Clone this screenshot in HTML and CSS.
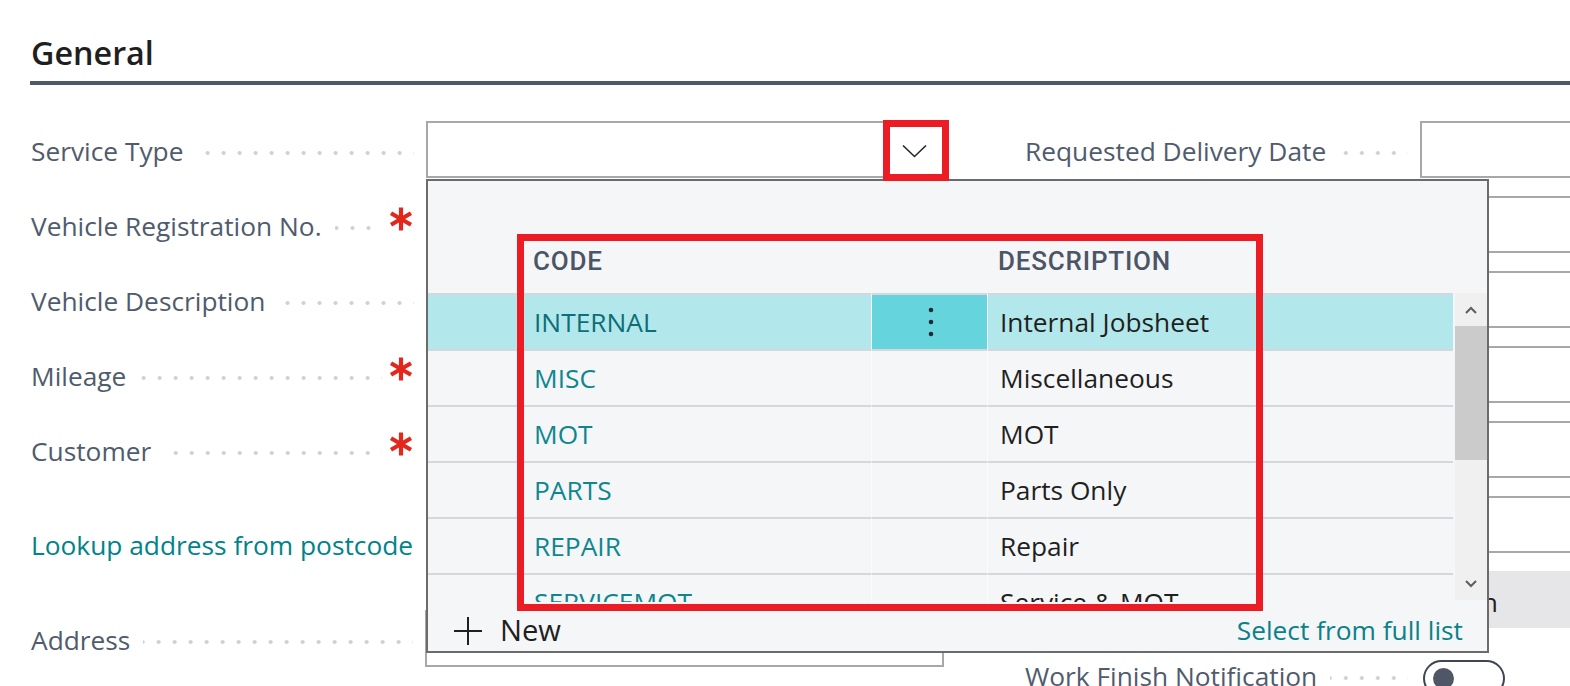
FILE: index.html
```html
<!DOCTYPE html>
<html lang="en">
<head>
<meta charset="utf-8">
<title>General</title>
<link rel="stylesheet" href="styles.css">
</head>
<body>
<div class="page">
  <header class="section-head">
    <h2 class="section-title">General</h2>
  </header>

  <div class="form">
    <div class="col">
      <div class="row">
        <div class="label"><span class="label-text">Service Type</span><span class="leader"></span></div>
        <div class="field field-select">
          <svg class="chevron" width="25" height="14" viewBox="0 0 25 14"><path d="M1 1.5 L12.5 12.5 L24 1.5" fill="none" stroke="#262626" stroke-width="1.6"/></svg>
        </div>
      </div>
      <div class="row">
        <div class="label label-req"><span class="label-text">Vehicle Registration No.</span><span class="leader"></span><span class="req"><svg width="24" height="24" viewBox="0 0 24 24"><g stroke="#e2271d" stroke-width="4.2"><line x1="12" y1="0.5" x2="12" y2="23.5"/><line x1="2" y1="6.2" x2="22" y2="17.8"/><line x1="2" y1="17.8" x2="22" y2="6.2"/></g></svg></span></div>
        <div class="field"></div>
      </div>
      <div class="row">
        <div class="label"><span class="label-text">Vehicle Description</span><span class="leader"></span></div>
        <div class="field"></div>
      </div>
      <div class="row">
        <div class="label label-req"><span class="label-text">Mileage</span><span class="leader"></span><span class="req"><svg width="24" height="24" viewBox="0 0 24 24"><g stroke="#e2271d" stroke-width="4.2"><line x1="12" y1="0.5" x2="12" y2="23.5"/><line x1="2" y1="6.2" x2="22" y2="17.8"/><line x1="2" y1="17.8" x2="22" y2="6.2"/></g></svg></span></div>
        <div class="field"></div>
      </div>
      <div class="row">
        <div class="label label-req"><span class="label-text">Customer</span><span class="leader"></span><span class="req"><svg width="24" height="24" viewBox="0 0 24 24"><g stroke="#e2271d" stroke-width="4.2"><line x1="12" y1="0.5" x2="12" y2="23.5"/><line x1="2" y1="6.2" x2="22" y2="17.8"/><line x1="2" y1="17.8" x2="22" y2="6.2"/></g></svg></span></div>
        <div class="field"></div>
      </div>
      <div class="row row-link">
        <a class="link" href="#">Lookup address from postcode</a>
      </div>
      <div class="row">
        <div class="label"><span class="label-text">Address</span><span class="leader"></span></div>
        <div class="field field-wide"></div>
      </div>
    </div>

    <div class="col">
      <div class="row">
        <div class="label"><span class="label-text">Requested Delivery Date</span><span class="leader"></span></div>
        <div class="field"></div>
      </div>
      <div class="row"><div class="label"></div><div class="field"></div></div>
      <div class="row"><div class="label"></div><div class="field"></div></div>
      <div class="row"><div class="label"></div><div class="field"></div></div>
      <div class="row"><div class="label"></div><div class="field"></div></div>
      <div class="row"><div class="label"></div><div class="field"></div></div>
      <div class="row">
        <div class="label"></div>
        <div class="field field-button"><span class="button-text">Scan</span></div>
      </div>
      <div class="row">
        <div class="label"><span class="label-text">Work Finish Notification</span><span class="leader"></span></div>
        <div class="toggle"><span class="knob"></span></div>
      </div>
    </div>
  </div>

  <div class="lookup-panel">
    <div class="panel-head">
      <span></span>
      <span class="th th-code">CODE</span>
      <span></span>
      <span class="th th-desc">DESCRIPTION</span>
    </div>
    <div class="panel-body">
      <div class="list">
        <div class="list-row selected">
          <span class="cell"></span>
          <span class="cell code">INTERNAL</span>
          <span class="cell action"><svg width="6" height="30" viewBox="0 0 6 30"><circle cx="3" cy="3" r="2.3" fill="#1f2b33"/><circle cx="3" cy="15" r="2.3" fill="#1f2b33"/><circle cx="3" cy="27" r="2.3" fill="#1f2b33"/></svg></span>
          <span class="cell desc">Internal Jobsheet</span>
        </div>
        <div class="list-row">
          <span class="cell"></span><span class="cell code">MISC</span><span class="cell action"></span><span class="cell desc">Miscellaneous</span>
        </div>
        <div class="list-row">
          <span class="cell"></span><span class="cell code">MOT</span><span class="cell action"></span><span class="cell desc">MOT</span>
        </div>
        <div class="list-row">
          <span class="cell"></span><span class="cell code">PARTS</span><span class="cell action"></span><span class="cell desc">Parts Only</span>
        </div>
        <div class="list-row">
          <span class="cell"></span><span class="cell code">REPAIR</span><span class="cell action"></span><span class="cell desc">Repair</span>
        </div>
        <div class="list-row">
          <span class="cell"></span><span class="cell code">SERVICEMOT</span><span class="cell action"></span><span class="cell desc">Service &amp; MOT</span>
        </div>
      </div>
      <div class="scrollbar">
        <div class="sb-btn"><svg width="12" height="8" viewBox="0 0 12 8"><path d="M1 7 L6 2 L11 7" fill="none" stroke="#5e5e5e" stroke-width="2"/></svg></div>
        <div class="sb-thumb"></div>
        <div class="sb-track"></div>
        <div class="sb-btn"><svg width="12" height="8" viewBox="0 0 12 8"><path d="M1 1 L6 6 L11 1" fill="none" stroke="#5e5e5e" stroke-width="2"/></svg></div>
      </div>
    </div>
    <div class="panel-foot">
      <span class="new-action">
        <svg class="plus" width="28" height="28" viewBox="0 0 28 28"><path d="M14 0 V28 M0 14 H28" stroke="#1f1f1f" stroke-width="2"/></svg>
        <span class="new-text">New</span>
      </span>
      <a class="link full-list" href="#">Select from full list</a>
    </div>
  </div>

  <div class="highlight highlight-chevron"></div>
  <div class="highlight highlight-list"></div>
</div>
</body>
</html>
```
FILE: styles.css
```css
html, body {
  margin: 0;
  padding: 0;
  background: #ffffff;
  overflow: hidden;
}

body {
  font-family: "Open Sans", "Noto Sans", sans-serif;
  font-size: 26.3px;
  color: #212121;
  width: 1570px;
  height: 686px;
}

.page {
  position: relative;
  height: 686px;
  overflow: hidden;
}

/* Section header */
.section-head {
  margin-left: 30px;
  padding-left: 1px;
  border-bottom: 4px solid #4f596a;
}

.section-title {
  margin: 0;
  padding: 32px 0 9px;
  font-size: 32.3px;
  font-weight: 600;
  line-height: 40px;
  color: #1f1f1f;
}

/* Form */
.form {
  display: grid;
  grid-template-columns: 913px 913px;
  column-gap: 81px;
  margin: 36px 0 0 31px;
}

.col {
  display: flex;
  flex-direction: column;
  gap: 18px;
}

.row {
  display: flex;
  align-items: center;
  height: 57px;
  flex: none;
}

.label {
  width: 385px;
  margin-right: 10px;
  padding-right: 2px;
  box-sizing: border-box;
  display: flex;
  align-items: center;
  height: 57px;
  color: #505b6d;
}

.label-req {
  padding-right: 0;
}

.label-text {
  white-space: nowrap;
  padding-top: 2px;
}

.leader {
  flex: 1;
  height: 20px;
  margin-left: 13px;
  background-image: radial-gradient(circle at 2px 50%, #cfd1d6 1.7px, transparent 2.2px);
  background-size: 16px 100%;
  background-repeat: repeat-x;
  background-position: right 0 top 3px;
}

.req {
  width: 34px;
  display: flex;
  justify-content: flex-end;
  padding-right: 3px;
  box-sizing: border-box;
  margin-bottom: 12px;
}

.req svg {
  display: block;
}

.field {
  width: 518px;
  height: 57px;
  box-sizing: border-box;
  border: 2px solid #a8a8a8;
  background: #ffffff;
  flex: none;
}

.field-wide {
  width: 519px;
}

.field-select {
  display: flex;
  align-items: center;
  justify-content: flex-end;
  padding-right: 15px;
}

.chevron {
  display: block;
  margin-top: 2px;
}

.field-button {
  border: none;
  background: #e6e6e8;
  display: flex;
  align-items: center;
  padding-left: 20px;
  padding-top: 4px;
}

.button-text {
  color: #212121;
}

.row-link {
  margin: 19px 0 20px;
}

.link {
  color: #00838a;
  text-decoration: none;
  white-space: nowrap;
}

.row-link .link {
  padding-top: 2px;
}

.toggle {
  align-self: flex-start;
  margin-top: 14px;
  margin-left: 3px;
  width: 82px;
  height: 37px;
  box-sizing: border-box;
  border: 2px solid #3e4553;
  border-radius: 20px;
  display: flex;
  align-items: center;
  padding-left: 8px;
  flex: none;
}

.knob {
  width: 21px;
  height: 21px;
  border-radius: 50%;
  background: #4f5666;
}

/* Lookup dropdown panel */
.lookup-panel {
  position: absolute;
  left: 426px;
  top: 179px;
  width: 1063px;
  height: 474px;
  box-sizing: border-box;
  border: 2px solid #6b6b6b;
  background: #f5f6f8;
  display: flex;
  flex-direction: column;
  z-index: 2;
}

.panel-head {
  height: 112px;
  flex: none;
  box-sizing: border-box;
  padding-bottom: 17px;
  display: grid;
  grid-template-columns: 89px 354px 116px 1fr 34px;
  align-items: end;
}

.th {
  font-family: "Roboto", "Open Sans", sans-serif;
  font-weight: 500;
  font-size: 26px;
  letter-spacing: 0.8px;
  line-height: 30px;
  color: #4b5566;
}

.th-code { padding-left: 16px; }
.th-desc { padding-left: 11px; }

.panel-body {
  display: flex;
  height: 309px;
  flex: none;
}

.list {
  flex: 1;
  overflow: hidden;
}

.list-row {
  display: grid;
  grid-template-columns: 89px 354px 116px 1fr;
  height: 56px;
}

.cell {
  border-top: 2px solid #d6d7dc;
  height: 54px;
  line-height: 54px;
  white-space: nowrap;
  overflow: hidden;
}

.cell + .cell {
  border-left: 1px solid #fbfbfc;
}

.code {
  color: #0e8690;
  padding-left: 16px;
}

.desc {
  color: #1f1f1f;
  padding-left: 12px;
}

.selected {
  background: #b2e8eb;
}

.selected .code {
  color: #0c6e77;
}

.selected .action {
  background: #66d4dc;
  display: flex;
  align-items: center;
  justify-content: center;
}

.action svg {
  display: block;
  margin-left: 2px;
}

.scrollbar {
  width: 32px;
  height: 307px;
  margin-left: 2px;
  background: #f0f0f0;
  display: flex;
  flex-direction: column;
}

.sb-btn {
  height: 33px;
  display: flex;
  align-items: center;
  justify-content: center;
  flex: none;
}

.sb-btn svg {
  display: block;
}

.sb-thumb {
  height: 134px;
  background: #cbcbcb;
  flex: none;
}

.sb-track {
  flex: 1;
}

.panel-foot {
  flex: 1;
  display: flex;
  align-items: center;
  justify-content: space-between;
  padding: 8px 24px 0 26px;
  line-height: 41px;
}

.new-action {
  display: flex;
  align-items: center;
  gap: 18px;
}

.plus {
  display: block;
}

.new-text {
  font-size: 29.2px;
  color: #1f1f1f;
}

.full-list {
  color: #0a8189;
}

/* Annotation highlights */
.highlight {
  position: absolute;
  box-sizing: border-box;
  border: 7px solid #ec1c24;
  z-index: 3;
}

.highlight-chevron {
  left: 883px;
  top: 120px;
  width: 66px;
  height: 61px;
}

.highlight-list {
  left: 517px;
  top: 234px;
  width: 746px;
  height: 377px;
}
```
